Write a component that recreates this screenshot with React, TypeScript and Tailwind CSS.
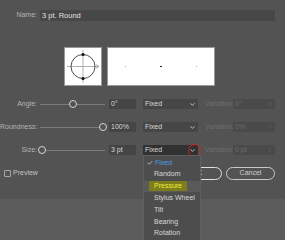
import { Check, ChevronDown, ChevronRight } from "lucide-react";

const font = { fontFamily: '"Liberation Sans", Arial, sans-serif' };

const Slider = ({ pos }: { pos: string }) => (
  <div className="relative w-[65px] h-[10px] flex items-center">
    <div className="w-full h-px bg-[#7c7c7c]" />
    <div
      className={`absolute top-1/2 -translate-y-1/2 -translate-x-1/2 w-[8px] h-[8px] rounded-full border border-[#d4d4d4] bg-[#535353] ${pos}`}
    />
  </div>
);

const Row = ({
  label,
  thumb,
  value,
  variation,
  open,
}: {
  label: string;
  thumb: string;
  value: string;
  variation: string;
  open?: boolean;
}) => (
  <div className="flex items-center h-[10px]">
    <div className="w-[38px] text-right text-[7px] text-[#b4b4b4] pr-px">{label}</div>
    <div className="ml-[2px]">
      <Slider pos={thumb} />
    </div>
    <div className="ml-[4px] w-[27px] h-[10px] bg-[#454545] text-[7px] text-[#d8d8d8] pl-[2px] leading-[10px]">
      {value}
    </div>
    <div
      className={`ml-[7px] w-[55px] h-[10px] flex items-center justify-between pl-[2px] pr-[2px] text-[7px] text-[#d8d8d8] ${
        open ? "bg-[#313131]" : "bg-[#464646]"
      }`}
    >
      <span>Fixed</span>
      <ChevronDown className="w-[7px] h-[7px] text-[#cfcfcf]" strokeWidth={3} />
    </div>
    <div className="ml-[7px] w-[28px] text-[7px] text-[#6f6f6f]">Variation:</div>
    <div className="w-[42px] h-[10px] bg-[#4a4a4a] flex items-center justify-between pl-[2px] pr-[2px] text-[7px] text-[#6c6c6c]">
      <span>{variation}</span>
      <ChevronRight className="w-[6px] h-[6px] text-[#666]" strokeWidth={3} />
    </div>
  </div>
);

const menuItems = ["Random", "Pressure", "Stylus Wheel", "Tilt", "Bearing", "Rotation"];

export default function App() {
  return (
    <div className="relative w-[285px] h-[240px] overflow-hidden bg-[#5c5c5c]" style={font}>
      <div className="h-[199px] bg-[#535353] pt-[10px]">
        {/* Name */}
        <div className="flex items-center h-[11px]">
          <div className="w-[37px] text-right text-[7px] text-[#b4b4b4]">Name:</div>
          <div className="ml-[3px] w-[235px] h-[11px] bg-[#474747] text-[7.5px] text-[#e0e0e0] pl-[2px] leading-[11px]">
            3 pt. Round
          </div>
        </div>

        {/* Preview boxes */}
        <div className="flex mt-[26px] ml-[64px] gap-[5px]">
          <div className="w-[38px] h-[39px] bg-white border border-[#9a9a9a]">
            <svg width="36" height="37" viewBox="0 0 36 37">
              <line x1="2" y1="18.5" x2="34" y2="18.5" stroke="#9c9c9c" strokeWidth="0.8" />
              <path d="M31 16.5 L34 18.5 L31 20.5" fill="none" stroke="#9c9c9c" strokeWidth="0.8" />
              <line x1="18" y1="2" x2="18" y2="35" stroke="#9c9c9c" strokeWidth="0.8" />
              <circle cx="18" cy="18.5" r="12" fill="none" stroke="#3a3a3a" strokeWidth="0.9" />
              <circle cx="18" cy="6.5" r="1.6" fill="#111" />
              <circle cx="18" cy="30.5" r="1.6" fill="#111" />
            </svg>
          </div>
          <div className="w-[108px] h-[39px] bg-white border border-[#9a9a9a] flex items-center justify-between px-[17px]">
            <div className="w-px h-px bg-[#aaa]" />
            <div className="w-[1.5px] h-[1.5px] bg-[#222]" />
            <div className="w-px h-px bg-[#aaa]" />
          </div>
        </div>

        {/* Rows */}
        <div className="flex flex-col gap-[13px] mt-[13px]">
          <Row label="Angle:" thumb="left-[33px]" value="0°" variation="0°" />
          <Row label="Roundness:" thumb="left-[63px]" value="100%" variation="0%" />
          <Row label="Size:" thumb="left-[2px]" value="3 pt" variation="0 pt" open />
        </div>

        {/* Preview + buttons */}
        <div className="flex items-center justify-between mt-[12px] pl-[4px] pr-[10px]">
          <div className="flex items-center gap-[2px]">
            <div className="w-[7px] h-[7px] border border-[#a8a8a8] rounded-[1px]" />
            <span className="text-[7px] text-[#c4c4c4]">Preview</span>
          </div>
          <div className="flex gap-[4px]">
            <div className="w-[50px] h-[13px] rounded-full border border-[#e0e0e0] text-[7px] text-[#e0e0e0] flex items-center justify-center">
              OK
            </div>
            <div className="w-[49px] h-[13px] rounded-full border border-[#c8c8c8] text-[7px] text-[#d0d0d0] flex items-center justify-center">
              Cancel
            </div>
          </div>
        </div>
      </div>

      {/* Red circle around open dropdown chevron */}
      <div className="absolute left-[188px] top-[144px] w-[13px] h-[13px] rounded-full border-[1.5px] border-[#d62020]" />

      {/* Dropdown menu */}
      <div className="absolute left-[143px] top-[155px] w-[58px] h-[90px] bg-[#4d4d4d] border border-[#5f5f5f] pt-[1px]">
        <div className="flex items-center h-[11.8px] text-[7px] text-[#4d9be6]">
          <Check className="w-[6px] h-[6px] ml-[3px] text-[#d8d8d8]" strokeWidth={3} />
          <span className="ml-[2px]">Fixed</span>
        </div>
        {menuItems.map((item) => (
          <div
            key={item}
            className={`flex items-center h-[11.8px] text-[7px] ${
              item === "Pressure" ? "bg-[#595959] text-[#eeee3a]" : "text-[#d8d8d8]"
            }`}
          >
            {item === "Pressure" ? (
              <span className="ml-[5px] px-[5px] bg-[#7d7d1c] leading-[10px]">{item}</span>
            ) : (
              <span className="ml-[10px]">{item}</span>
            )}
          </div>
        ))}
      </div>
    </div>
  );
}
